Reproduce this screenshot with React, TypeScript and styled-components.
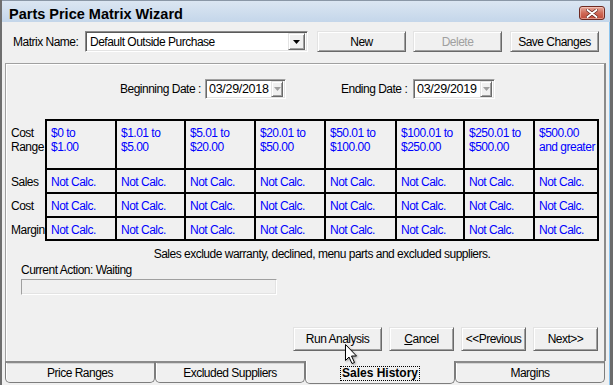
import React from "react";
import styled, { createGlobalStyle } from "styled-components";

const Global = createGlobalStyle`
  html, body { margin: 0; padding: 0; background: #f0f0f0; }
  body { font-family: "Liberation Sans", Arial, sans-serif; font-size: 12px; letter-spacing: -0.5px; color: #000; }
  * { box-sizing: border-box; }
`;

const Window = styled.div`
  position: relative;
  width: 613px;
  height: 385px;
  display: flex;
  flex-direction: column;
  border-left: 2px solid #6e6e6e;
  border-right: 3px solid #6b6b6b;
  box-shadow: inset -1px 0 #8cc4ee;
  background: #f0f0f0;
  overflow: hidden;
`;

const TitleBar = styled.div`
  height: 22px;
  flex: none;
  display: flex;
  align-items: center;
  justify-content: space-between;
  padding: 1px 5px 0 7px;
  background: linear-gradient(#dbe6f2, #c4d6ea);
  border-top: 1px solid #8a97a6;
`;

const Title = styled.div`
  font-size: 14.5px;
  font-weight: bold;
  letter-spacing: 0;
  padding-top: 3px;
`;

const CloseBtn = styled.div`
  width: 26px;
  height: 14px;
  margin-top: 2px;
  border: 1px solid #6e2a22;
  border-radius: 3px;
  background: linear-gradient(#e6a99c, #cf6a58 50%, #c04a38);
  box-shadow: inset 0 0 0 1px rgba(255, 220, 210, 0.5);
  display: flex;
  align-items: center;
  justify-content: center;
`;

const TopRow = styled.div`
  flex: none;
  display: flex;
  align-items: center;
  height: 21px;
  margin: 9px 0 11px;
  padding-left: 11px;
`;

const FieldLabel = styled.div<{ $w: number }>`
  width: ${(p) => p.$w}px;
  flex: none;
  white-space: nowrap;
`;

const Combo = styled.div`
  width: 223px;
  height: 21px;
  flex: none;
  display: flex;
  align-items: center;
  background: #fff;
  border: 1px solid;
  border-color: #8a8a8a #ffffff #ffffff #8a8a8a;
  box-shadow: inset 1px 1px #5a5a5a, inset -1px -1px #e3e3e3;
  padding: 0 2px 0 4px;
  font-size: 12px;
`;

const ComboText = styled.div`
  flex: 1;
  white-space: nowrap;
`;

const DropBtn = styled.div<{ $w: number; $h: number }>`
  width: ${(p) => p.$w}px;
  height: ${(p) => p.$h}px;
  flex: none;
  background: #f0f0f0;
  border: 1px solid;
  border-color: #e3e3e3 #696969 #696969 #e3e3e3;
  box-shadow: inset 1px 1px #fff, inset -1px -1px #a0a0a0;
  display: flex;
  align-items: center;
  justify-content: center;
`;

const Button = styled.div<{ $w: number; $ml?: number; $disabled?: boolean }>`
  width: ${(p) => p.$w}px;
  height: ${(p) => (p.$ml === undefined ? 24 : 21)}px;
  margin-left: ${(p) => p.$ml ?? 0}px;
  flex: none;
  display: flex;
  align-items: center;
  justify-content: center;
  background: #f0f0f0;
  border: 1px solid;
  border-color: #e3e3e3 #696969 #696969 #e3e3e3;
  box-shadow: inset 1px 1px #fff, inset -1px -1px #a0a0a0;
  color: ${(p) => (p.$disabled ? "#a0a0a0" : "#000")};
  white-space: nowrap;
`;

const Panel = styled.div`
  flex: none;
  height: 298px;
  margin: 0 4px 0 3px;
  display: flex;
  flex-direction: column;
  border-top: 1px solid #a0a0a0;
  border-left: 1px solid #a0a0a0;
  border-right: 2px solid #8a8a8a;
  box-shadow: inset 1px 1px #fff;
`;

const DateRow = styled.div`
  display: flex;
  align-items: center;
  height: 20px;
  margin-top: 15px;
  padding-left: 114px;
`;

const DateBox = styled.div<{ $w: number }>`
  width: ${(p) => p.$w}px;
  height: 20px;
  flex: none;
  display: flex;
  align-items: center;
  background: #fff;
  border: 1px solid;
  border-color: #a0a0a0 #ffffff #ffffff #a0a0a0;
  box-shadow: inset 1px 1px #696969, inset -1px -1px #e3e3e3;
  padding: 0 2px 0 3px;
  font-size: 12.5px;
  letter-spacing: -0.3px;
`;

const Spacer = styled.div<{ $w: number }>`
  width: ${(p) => p.$w}px;
  flex: none;
`;

const MatrixArea = styled.div`
  display: flex;
  margin-top: 20px;
`;

const RowLabels = styled.div`
  width: 39px;
  flex: none;
  display: grid;
  grid-template-rows: 47px 22px 22px 21px;
  row-gap: 2px;
  padding: 2px 0 0 5px;
`;

const RowLabel = styled.div`
  line-height: 14px;
  padding-top: 5px;
  white-space: nowrap;
`;

const Matrix = styled.div`
  display: grid;
  grid-template-columns: 68px 67px 68px 68px 69px 66px 68px 62px;
  grid-template-rows: 47px 22px 22px 21px;
  gap: 2px;
  padding: 2px;
  background: #000;
`;

const Cell = styled.div`
  background: #f0f0f0;
  color: #0000ff;
  line-height: 14px;
  padding: 5px 0 0 4px;
  white-space: nowrap;
`;

const Note = styled.div`
  margin: 6px 0 0 39px;
  width: 554px;
  text-align: center;
  line-height: 14px;
  white-space: nowrap;
`;

const Action = styled.div`
  margin-top: 2px;
  padding-left: 15px;
  line-height: 14px;
`;

const Progress = styled.div`
  margin: 2px 0 0 15px;
  width: 256px;
  height: 16px;
  border: 1px solid;
  border-color: #a0a0a0 #fff #fff #a0a0a0;
  box-shadow: inset -1px -1px #e3e3e3;
`;

const ActionRow = styled.div`
  display: flex;
  justify-content: flex-end;
  gap: 7px;
  margin-top: 32px;
  padding-right: 6px;
`;

const Underline = styled.span`
  text-decoration: underline;
`;

const TabStrip = styled.div`
  flex: none;
  height: 24px;
  display: flex;
  padding-left: 3px;
`;

const Tab = styled.div<{ $active?: boolean }>`
  width: ${(p) => (p.$active ? 150 : 150)}px;
  height: ${(p) => (p.$active ? 23 : 22)}px;
  flex: none;
  display: flex;
  align-items: center;
  justify-content: center;
  border: 1px solid #7d7d7d;
  border-top: ${(p) => (p.$active ? "none" : "2px solid #8a8a8a")};
  border-radius: 0 0 5px 5px;
  box-shadow: ${(p) => (p.$active ? "inset 1px 0 #fff" : "inset 1px 0 #fff, inset 0 1px #d4d4d4")};
  font-weight: ${(p) => (p.$active ? "bold" : "normal")};
  padding-top: ${(p) => (p.$active ? 3 : 1)}px;
  white-space: nowrap;
`;

const Focus = styled.span`
  outline: 1px dotted #000;
  outline-offset: 0px;
  padding: 0 1px;
  letter-spacing: 0;
  line-height: 13px;
`;

const Cursor = styled.svg`
  position: absolute;
  left: 342px;
  top: 343px;
  filter: drop-shadow(1px 1px 1px rgba(0, 0, 0, 0.35));
`;

const ranges = [
  ["$0 to", "$1.00"],
  ["$1.01 to", "$5.00"],
  ["$5.01 to", "$20.00"],
  ["$20.01 to", "$50.00"],
  ["$50.01 to", "$100.00"],
  ["$100.01 to", "$250.00"],
  ["$250.01 to", "$500.00"],
  ["$500.00", "and greater"],
];

const GrayArrow = ({ color }: { color: string }) => (
  <svg width="7" height="4" viewBox="0 0 7 4">
    <path d="M0 0 H7 L3.5 4 Z" fill={color} />
  </svg>
);

export default function App() {
  return (
    <>
      <Global />
      <Window>
        <TitleBar>
          <Title>Parts Price Matrix Wizard</Title>
          <CloseBtn>
            <svg width="12" height="9" viewBox="0 0 12 9">
              <path d="M1.5 1 L10.5 8 M10.5 1 L1.5 8" stroke="#5a1e18" strokeWidth="3.2" strokeLinecap="round" />
              <path d="M1.5 1 L10.5 8 M10.5 1 L1.5 8" stroke="#fff" strokeWidth="2" strokeLinecap="round" />
            </svg>
          </CloseBtn>
        </TitleBar>

        <TopRow>
          <FieldLabel $w={72}>Matrix Name:</FieldLabel>
          <Combo>
            <ComboText>Default Outside Purchase</ComboText>
            <DropBtn $w={17} $h={17}>
              <GrayArrow color="#000" />
            </DropBtn>
          </Combo>
          <Button $w={89} $ml={9}>New</Button>
          <Button $w={89} $ml={7} $disabled>Delete</Button>
          <Button $w={89} $ml={8}>Save Changes</Button>
        </TopRow>

        <Panel>
          <DateRow>
            <FieldLabel $w={85}>Beginning Date :</FieldLabel>
            <DateBox $w={81}>
              <ComboText>03/29/2018</ComboText>
              <DropBtn $w={12} $h={16}>
                <GrayArrow color="#a0a0a0" />
              </DropBtn>
            </DateBox>
            <Spacer $w={55} />
            <FieldLabel $w={72}>Ending Date :</FieldLabel>
            <DateBox $w={82}>
              <ComboText>03/29/2019</ComboText>
              <DropBtn $w={12} $h={16}>
                <GrayArrow color="#a0a0a0" />
              </DropBtn>
            </DateBox>
          </DateRow>

          <MatrixArea>
            <RowLabels>
              <RowLabel>
                Cost
                <br />
                Range
              </RowLabel>
              <RowLabel>Sales</RowLabel>
              <RowLabel>Cost</RowLabel>
              <RowLabel>Margin</RowLabel>
            </RowLabels>
            <Matrix>
              {ranges.map(([a, b]) => (
                <Cell key={a}>
                  {a}
                  <br />
                  {b}
                </Cell>
              ))}
              {["s", "c", "m"].map((r) =>
                ranges.map((_, i) => <Cell key={r + i}>Not Calc.</Cell>)
              )}
            </Matrix>
          </MatrixArea>

          <Note>Sales exclude warranty, declined, menu parts and excluded suppliers.</Note>
          <Action>Current Action: Waiting</Action>
          <Progress />

          <ActionRow>
            <Button $w={89}>Run Analysis</Button>
            <Button $w={65}>
              <span>
                <Underline>C</Underline>ancel
              </span>
            </Button>
            <Button $w={65}>&lt;&lt;Previous</Button>
            <Button $w={65}>Next&gt;&gt;</Button>
          </ActionRow>
        </Panel>

        <TabStrip>
          <Tab>Price Ranges</Tab>
          <Tab>Excluded Suppliers</Tab>
          <Tab $active>
            <Focus>Sales History</Focus>
          </Tab>
          <Tab>Margins</Tab>
        </TabStrip>

        <Cursor width="14" height="22" viewBox="0 0 14 22">
          <path d="M1.5 1.5 V17.5 L5 14 L8 20.5 L10.5 19.5 L7.5 13 H12.5 Z" fill="#fff" stroke="#000" strokeWidth="1" strokeLinejoin="miter" />
        </Cursor>
      </Window>
    </>
  );
}
